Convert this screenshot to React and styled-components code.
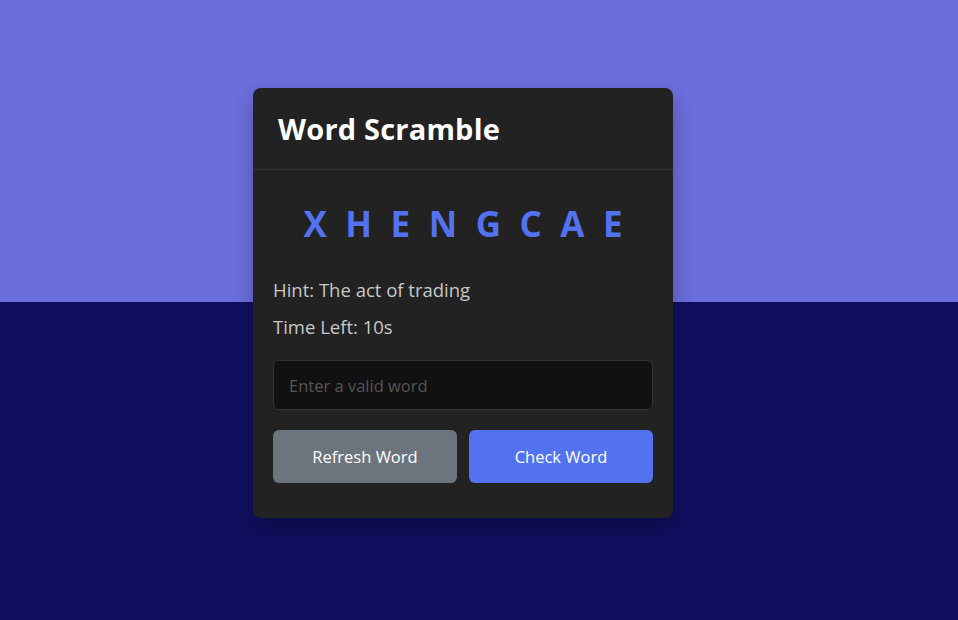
import React from "react";
import styled, { createGlobalStyle } from "styled-components";

const Global = createGlobalStyle`
  * { box-sizing: border-box; }
  html, body { margin: 0; padding: 0; }
  body { font-family: "Open Sans", "Noto Sans", sans-serif; }
`;

const Page = styled.div`
  width: 958px;
  height: 620px;
  background: linear-gradient(to bottom, #6b6edb 0, #6b6edb 302px, #100f5f 302px, #100f5f 100%);
  display: flex;
  align-items: flex-start;
  justify-content: flex-start;
  padding: 88px 0 0 253px;
`;

const Card = styled.div`
  width: 420px;
  background: #222222;
  border-radius: 8px;
  box-shadow: 0 10px 20px rgba(0, 0, 0, 0.25);
  overflow: hidden;
`;

const Header = styled.div`
  height: 82px;
  padding: 0 25px;
  display: flex;
  align-items: center;
  border-bottom: 1px solid #333333;
`;

const Title = styled.h2`
  margin: 0;
  color: #ffffff;
  font-size: 29px;
  font-weight: 700;
  letter-spacing: 0.2px;
`;

const Body = styled.div`
  padding: 20px 20px 35px;
`;

const Scrambled = styled.p`
  margin: 9px 0 0;
  text-align: center;
  color: #5372f0;
  font-size: 35px;
  font-weight: 700;
  letter-spacing: 18.5px;
  margin-right: -18.5px;
  line-height: 50px;
`;

const Details = styled.div`
  margin-top: 26px;
  display: flex;
  flex-direction: column;
  gap: 8px;
`;

const Info = styled.p`
  margin: 0;
  color: #c8c8c8;
  font-size: 18.5px;
  line-height: 29px;
`;

const Input = styled.input`
  margin-top: 19px;
  width: 100%;
  height: 50px;
  background: #111111;
  border: 1px solid #333333;
  border-radius: 6px;
  padding: 0 15px;
  color: #ddd;
  font-family: inherit;
  font-size: 16.5px;
  outline: none;
  &::placeholder { color: #555555; }
`;

const Buttons = styled.div`
  margin-top: 20px;
  display: flex;
  gap: 12px;
`;

const Button = styled.button`
  flex: 1;
  height: 53px;
  border: none;
  border-radius: 6px;
  background: ${(p) => (p.$primary ? "#5372f0" : "#6c757d")};
  color: #ffffff;
  font-family: inherit;
  font-size: 16.5px;
  font-weight: 500;
  cursor: pointer;
`;

export default function App() {
  return (
    <Page>
      <Global />
      <Card>
        <Header>
          <Title>Word Scramble</Title>
        </Header>
        <Body>
          <Scrambled>XHENGCAE</Scrambled>
          <Details>
            <Info>Hint: The act of trading</Info>
            <Info>Time Left: 10s</Info>
          </Details>
          <Input placeholder="Enter a valid word" />
          <Buttons>
            <Button>Refresh Word</Button>
            <Button $primary>Check Word</Button>
          </Buttons>
        </Body>
      </Card>
    </Page>
  );
}
